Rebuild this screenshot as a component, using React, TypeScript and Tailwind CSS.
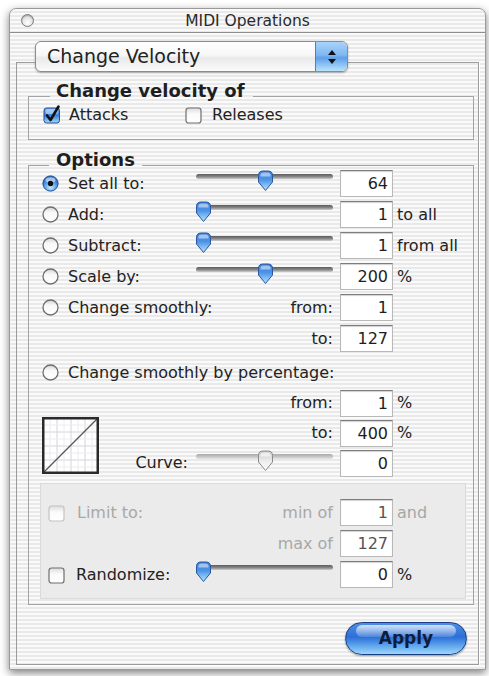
import React from "react";

const FONT = { fontFamily: '"DejaVu Sans", "Liberation Sans", sans-serif' };

function Radio({ on }: { on?: boolean }) {
  return (
    <svg width="17" height="17" viewBox="0 0 17 17" className="shrink-0">
      <defs>
        <radialGradient id="radOn" cx="50%" cy="75%" r="65%">
          <stop offset="0" stopColor="#c4ecff" />
          <stop offset="0.55" stopColor="#5fa6ec" />
          <stop offset="1" stopColor="#2461c4" />
        </radialGradient>
        <linearGradient id="radOff" x1="0" y1="0" x2="0" y2="1">
          <stop offset="0" stopColor="#d2d2d2" />
          <stop offset="0.35" stopColor="#f8f8f8" />
          <stop offset="1" stopColor="#ffffff" />
        </linearGradient>
      </defs>
      {on ? (
        <>
          <circle cx="8.5" cy="8.5" r="7.6" fill="url(#radOn)" stroke="#1f4a8f" strokeWidth="1" />
          <ellipse cx="8.5" cy="5" rx="5" ry="2.8" fill="#ffffff" opacity="0.55" />
          <circle cx="8.5" cy="8.5" r="2.7" fill="#111" />
        </>
      ) : (
        <>
          <circle cx="8.5" cy="8.5" r="7.5" fill="url(#radOff)" stroke="#6e6e6e" strokeWidth="1.3" />
        </>
      )}
    </svg>
  );
}

function Check({ on, disabled }: { on?: boolean; disabled?: boolean }) {
  return (
    <svg width="18" height="18" viewBox="0 0 18 18" className="shrink-0 overflow-visible">
      <defs>
        <linearGradient id="chkOn" x1="0" y1="0" x2="0" y2="1">
          <stop offset="0" stopColor="#6aa8ee" />
          <stop offset="0.5" stopColor="#3a80dc" />
          <stop offset="1" stopColor="#a6dcfb" />
        </linearGradient>
        <linearGradient id="chkOff" x1="0" y1="0" x2="0" y2="1">
          <stop offset="0" stopColor="#dcdcdc" />
          <stop offset="0.4" stopColor="#fafafa" />
          <stop offset="1" stopColor="#ffffff" />
        </linearGradient>
      </defs>
      {on ? (
        <>
          <rect x="1" y="2" width="15.5" height="15" rx="2.5" fill="url(#chkOn)" stroke="#234f95" />
          <rect x="2.5" y="3" width="12.5" height="5" rx="2" fill="#fff" opacity="0.45" />
          <path d="M4 9.5 L7.5 14 L15.5 0.5" fill="none" stroke="#111" strokeWidth="2.6" strokeLinecap="round" strokeLinejoin="round" />
        </>
      ) : (
        <rect
          x="1"
          y="2"
          width="15"
          height="15"
          rx="2.5"
          fill="url(#chkOff)"
          stroke={disabled ? "#c4c4c4" : "#6e6e6e"}
          strokeWidth="1.2"
        />
      )}
    </svg>
  );
}

function Thumb({ grey }: { grey?: boolean }) {
  return (
    <svg width="17" height="22" viewBox="0 0 17 22">
      <defs>
        <linearGradient id="thBlue" x1="0" y1="0" x2="0" y2="1">
          <stop offset="0" stopColor="#3c7fd8" />
          <stop offset="0.45" stopColor="#4d94e6" />
          <stop offset="1" stopColor="#b4e6ff" />
        </linearGradient>
        <linearGradient id="thGrey" x1="0" y1="0" x2="0" y2="1">
          <stop offset="0" stopColor="#c8c8c8" />
          <stop offset="0.5" stopColor="#ececec" />
          <stop offset="1" stopColor="#ffffff" />
        </linearGradient>
      </defs>
      <path
        d="M1.5 5.5 Q1.5 1 6 1 L11 1 Q15.5 1 15.5 5.5 L15.5 12 L8.5 20.5 L1.5 12 Z"
        fill={grey ? "url(#thGrey)" : "url(#thBlue)"}
        stroke={grey ? "#8a8a8a" : "#2a579e"}
        strokeWidth="1"
        strokeLinejoin="round"
      />
      <path d="M3.5 4.5 Q4 2.5 6.5 2.5 L10.5 2.5 Q13 2.5 13.5 4.5 L13.5 6.5 L3.5 6.5 Z" fill="#fff" opacity={grey ? 0.6 : 0.5} />
    </svg>
  );
}

function Slider({ frac, grey }: { frac: number; grey?: boolean }) {
  return (
    <div className="relative w-[137px] h-[31px] shrink-0">
      <div
        className={
          grey
            ? "absolute left-0 right-0 top-[6px] h-[5px] rounded-full bg-[linear-gradient(#a9a9a9,#c9c9c9_60%,#e6e6e6)]"
            : "absolute left-0 right-0 top-[6px] h-[5px] rounded-full bg-[linear-gradient(#5a5a5a,#8e8e8e_60%,#cfcfcf)]"
        }
      />
      <div className="absolute top-[2px]" style={{ left: -1 + frac * 123 }}>
        <Thumb grey={grey} />
      </div>
    </div>
  );
}

function Field({ v, dim }: { v: string; dim?: boolean }) {
  return (
    <div
      className={
        "ml-[7px] w-[53px] h-[27px] shrink-0 bg-white border border-[#b8b8b8] border-t-[#7d7d7d] shadow-[inset_0_1px_1px_rgba(0,0,0,0.18)] text-right pr-[4px] leading-[25px] text-[16px] " +
        (dim ? "text-[#555]" : "text-[#1e1e1e]")
      }
    >
      {v}
    </div>
  );
}

function Suffix({ t, dim }: { t: string; dim?: boolean }) {
  return <span className={"ml-[4px] text-[16px] " + (dim ? "text-[#a6a6a6]" : "text-[#222]")}>{t}</span>;
}

function OptRow({
  label,
  on,
  frac,
  value,
  suffix,
}: {
  label: string;
  on?: boolean;
  frac: number;
  value: string;
  suffix?: string;
}) {
  return (
    <div className="flex items-center h-[31px] pl-[13px]">
      <div className="w-[154px] flex items-center gap-[9px] shrink-0">
        <Radio on={on} />
        <span className="text-[16px] text-[#222] whitespace-nowrap">{label}</span>
      </div>
      <Slider frac={frac} />
      <Field v={value} />
      {suffix && <Suffix t={suffix} />}
    </div>
  );
}

function Graph() {
  const g = [14, 28, 42];
  return (
    <svg width="57" height="57" viewBox="0 0 57 57" className="-mt-[1px]">
      <rect x="1" y="1" width="55" height="55" fill="#fff" />
      {g.map((p) => (
        <g key={p}>
          <line x1={p + 1} y1="1" x2={p + 1} y2="56" stroke="#d4d4dc" strokeWidth="1" />
          <line x1="1" y1={p + 1} x2="56" y2={p + 1} stroke="#d4d4dc" strokeWidth="1" />
        </g>
      ))}
      {[7, 21, 35, 49].map((p) => (
        <g key={"f" + p}>
          <line x1={p + 1} y1="1" x2={p + 1} y2="56" stroke="#ececf0" strokeWidth="1" />
          <line x1="1" y1={p + 1} x2="56" y2={p + 1} stroke="#ececf0" strokeWidth="1" />
        </g>
      ))}
      <line x1="2" y1="55" x2="55" y2="2" stroke="#555" strokeWidth="1.2" />
      <rect x="1.25" y="1.25" width="54.5" height="54.5" fill="none" stroke="#2a2a2a" strokeWidth="2.5" />
    </svg>
  );
}

export default function App() {
  return (
    <div className="w-[489px] h-[676px] bg-white pt-[8px] pl-[9px] overflow-hidden" style={FONT}>
      <div className="w-[477px] h-[662px] rounded-t-[7px] border border-[#9a9a9a] shadow-[0_3px_9px_rgba(0,0,0,0.5)] bg-[image:repeating-linear-gradient(180deg,#fafafa_0px,#fafafa_2px,#e9e9e9_2px,#e9e9e9_4px)] flex flex-col">
        {/* title bar */}
        <div className="h-[24px] border-b border-[#8e8e8e] flex items-center relative shrink-0">
          <div className="ml-[11px] w-[13px] h-[13px] rounded-full border border-[#7a7a7a] bg-[radial-gradient(circle_at_50%_70%,#ffffff,#dcdcdc_70%,#bdbdbd)] shadow-[inset_0_1px_1px_rgba(0,0,0,0.25)]" />
          <div className="flex-1 text-center text-[15.5px] text-[#2a2a2a] pr-[24px] leading-[22px]">MIDI Operations</div>
        </div>

        {/* body */}
        <div className="px-[6px] flex-1">
          <fieldset className="mt-[8px] w-[463px] border border-[#9c9c9c] shadow-[1px_1px_0_#ffffff]">
            <legend className="ml-[18px] pb-[11px]">
              <div className="w-[313px] h-[31px] rounded-[6px] border border-[#8c8c8c] shadow-[0_1px_2px_rgba(0,0,0,0.3)] bg-[linear-gradient(#ffffff,#f7f7f7_45%,#e9e9e9_55%,#fbfbfb)] flex items-stretch overflow-hidden">
                <div className="flex-1 pl-[11px] flex items-center text-[19px] text-[#222] leading-none">Change Velocity</div>
                <div className="w-[32px] border-l border-[#4f7fc2] bg-[linear-gradient(#a8d3fa,#7fb7f2_45%,#5e9fea_55%,#b9e3fd)] flex flex-col items-center justify-center gap-[4px]">
                  <svg width="8" height="5" viewBox="0 0 8 5">
                    <path d="M4 0 L8 5 L0 5 Z" fill="#111" />
                  </svg>
                  <svg width="8" height="5" viewBox="0 0 8 5">
                    <path d="M0 0 L8 0 L4 5 Z" fill="#111" />
                  </svg>
                </div>
              </div>
            </legend>

            {/* Change velocity of */}
            <fieldset className="-mt-[2px] ml-[11px] w-[446px] border border-[#a4a4a4]">
              <legend className="ml-[21px] pl-[6px] pr-[9px] pb-[11px] text-[18px] font-bold leading-[20px] text-[#1e1e1e]">
                Change velocity of
              </legend>
              <div className="-mt-[12px] h-[30px] pl-[14px] mb-[9px] flex items-center">
                <div className="w-[142px] flex items-center gap-[8px]">
                  <Check on />
                  <span className="text-[16px] text-[#222]">Attacks</span>
                </div>
                <div className="flex items-center gap-[9px]">
                  <Check />
                  <span className="text-[16px] text-[#222]">Releases</span>
                </div>
              </div>
            </fieldset>

            {/* Options */}
            <fieldset className="mt-[10px] ml-[11px] w-[446px] border border-[#a4a4a4]">
              <legend className="ml-[20px] px-[7px] pb-[11px] text-[18px] font-bold leading-[20px] text-[#1e1e1e]">
                Options
              </legend>
              <div className="-mt-[13px] pb-[5px]">
                <OptRow label="Set all to:" on frac={0.5} value="64" />
                <OptRow label="Add:" frac={0} value="1" suffix="to all" />
                <OptRow label="Subtract:" frac={0} value="1" suffix="from all" />
                <OptRow label="Scale by:" frac={0.5} value="200" suffix="%" />
                <div className="flex items-center h-[31px] pl-[13px]">
                  <div className="w-[154px] flex items-center gap-[9px] shrink-0">
                    <Radio />
                    <span className="text-[16px] text-[#222] whitespace-nowrap">Change smoothly:</span>
                  </div>
                  <div className="w-[137px] text-right text-[16px] text-[#222]">from:</div>
                  <Field v="1" />
                </div>
                <div className="flex items-center h-[31px] pl-[13px]">
                  <div className="w-[154px] shrink-0" />
                  <div className="w-[137px] text-right text-[16px] text-[#222]">to:</div>
                  <Field v="127" />
                </div>
                <div className="mt-[3px] flex items-center h-[31px] pl-[13px]">
                  <div className="flex items-center gap-[9px]">
                    <Radio />
                    <span className="text-[16px] text-[#222] whitespace-nowrap">Change smoothly by percentage:</span>
                  </div>
                </div>
                <div className="pl-[13px] grid grid-cols-[154px_137px_auto] grid-rows-[30px_30px_30px]">
                  <div />
                  <div className="flex items-center justify-end text-[16px] text-[#222]">from:</div>
                  <div className="flex items-center">
                    <Field v="1" />
                    <Suffix t="%" />
                  </div>
                  <div className="row-span-2 flex items-start">
                    <Graph />
                    <div className="flex-1 self-end h-[30px] flex items-center justify-end pr-[8px] text-[16px] text-[#222]">
                      Curve:
                    </div>
                  </div>
                  <div className="flex items-center justify-end text-[16px] text-[#222]">to:</div>
                  <div className="flex items-center">
                    <Field v="400" />
                    <Suffix t="%" />
                  </div>
                  <div className="flex items-center">
                    <Slider frac={0.5} grey />
                  </div>
                  <div className="flex items-center">
                    <Field v="0" />
                  </div>
                </div>

                {/* grey box */}
                <div className="mt-[5px] ml-[11px] w-[426px] bg-[#ebebeb] border border-[#dadada] pt-[13px] pb-[8px]">
                  <div className="flex items-center h-[31px] pl-[7px]">
                    <div className="w-[148px] flex items-center gap-[11px] shrink-0">
                      <Check disabled />
                      <span className="text-[16px] text-[#a8a8a8]">Limit to:</span>
                    </div>
                    <div className="w-[137px] text-right text-[16px] text-[#a8a8a8]">min of</div>
                    <Field v="1" dim />
                    <Suffix t="and" dim />
                  </div>
                  <div className="flex items-center h-[31px] pl-[7px]">
                    <div className="w-[148px] shrink-0" />
                    <div className="w-[137px] text-right text-[16px] text-[#a8a8a8]">max of</div>
                    <Field v="127" dim />
                  </div>
                  <div className="flex items-center h-[31px] pl-[7px]">
                    <div className="w-[148px] flex items-center gap-[10px] shrink-0">
                      <Check />
                      <span className="text-[16px] text-[#222]">Randomize:</span>
                    </div>
                    <Slider frac={0} />
                    <Field v="0" />
                    <Suffix t="%" />
                  </div>
                </div>
              </div>
            </fieldset>

            <div className="flex justify-end mt-[17px] mb-[9px] pr-[11px]">
              <div className="relative w-[122px] h-[33px] rounded-full border border-[#1b3c80] bg-[linear-gradient(#4d8fe6,#2d6fd6_45%,#3b82e0_55%,#9ad8fc)] shadow-[0_1px_2px_rgba(0,0,0,0.35)] flex items-center justify-center overflow-hidden">
                <div className="absolute left-[10px] right-[10px] top-[2px] h-[12px] rounded-full bg-[linear-gradient(rgba(255,255,255,0.75),rgba(255,255,255,0.15))]" />
                <span className="relative text-[17px] font-bold text-[#0e1d3c]">Apply</span>
              </div>
            </div>
          </fieldset>
        </div>
      </div>
    </div>
  );
}
